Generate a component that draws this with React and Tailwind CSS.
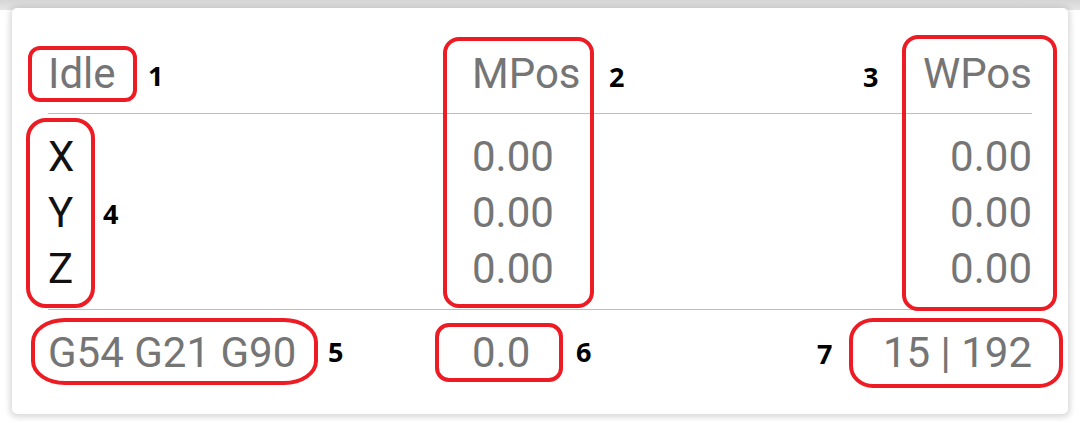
import React from 'react'

const axes = [
  { name: 'X', m: '0.00', w: '0.00' },
  { name: 'Y', m: '0.00', w: '0.00' },
  { name: 'Z', m: '0.00', w: '0.00' },
]

// red call-out boxes drawn over the card
const boxes = [
  'left-[28px] top-[46px] w-[109px] h-[56px] rounded-[12px]',
  'left-[443px] top-[37px] w-[151px] h-[271px] rounded-[16px]',
  'left-[902px] top-[35px] w-[155px] h-[276px] rounded-[16px]',
  'left-[26px] top-[118px] w-[69px] h-[190px] rounded-[20px]',
  'left-[31px] top-[318px] w-[287px] h-[67px] rounded-[34px/24px]',
  'left-[435px] top-[323px] w-[128px] h-[59px] rounded-[14px]',
  'left-[849px] top-[318px] w-[214px] h-[70px] rounded-[24px/22px]',
]

const labels = [
  { n: '1', c: 'left-[148px] top-[62px]' },
  { n: '2', c: 'left-[609px] top-[63px]' },
  { n: '3', c: 'left-[863px] top-[63px]' },
  { n: '4', c: 'left-[103px] top-[200px]' },
  { n: '5', c: 'left-[328px] top-[338px]' },
  { n: '6', c: 'left-[576px] top-[338px]' },
  { n: '7', c: 'left-[817px] top-[340px]' },
]

const Row = ({ children, className = '' }) => (
  <div className={`grid grid-cols-[424px_1fr_1fr] h-[56px] leading-[56px] ${className}`}>{children}</div>
)

const App = () => {
  return (
    <div className="relative w-[1080px] h-[422px] overflow-hidden bg-white pt-[8px] px-[12px] font-['Roboto',sans-serif]">
      <div className="absolute left-0 top-0 w-full h-[10px] bg-gradient-to-b from-[#d6d6d6] to-[#e6e6e6]" />
      <div className="relative bg-white rounded-[5px] h-[406px] px-[36px] pt-[38px] shadow-[0_1px_6px_2px_rgba(0,0,0,0.16)] text-[42px] text-[#757575]">
        <div className="pb-[11px] border-b border-[#bdbdbd]">
          <Row>
            <span>Idle</span>
            <span>MPos</span>
            <span className="text-right">WPos</span>
          </Row>
        </div>
        <div className="pt-[15px] pb-[12px] border-b border-[#bdbdbd]">
          {axes.map(a => (
            <Row key={a.name}>
              <span className="text-[#111]">{a.name}</span>
              <span>{a.m}</span>
              <span className="text-right">{a.w}</span>
            </Row>
          ))}
        </div>
        <div className="pt-[15px]">
          <Row>
            <span>G54 G21 G90</span>
            <span>0.0</span>
            <span className="text-right">15 | 192</span>
          </Row>
        </div>
      </div>

      {boxes.map((b, i) => (
        <div key={i} className={`absolute border-[4px] border-[#ed1c24] ${b}`} />
      ))}
      {labels.map(l => (
        <div key={l.n} className={`absolute text-[27px] leading-none font-bold text-black font-['Open_Sans',sans-serif] ${l.c}`}>
          {l.n}
        </div>
      ))}
    </div>
  )
}

export default App
